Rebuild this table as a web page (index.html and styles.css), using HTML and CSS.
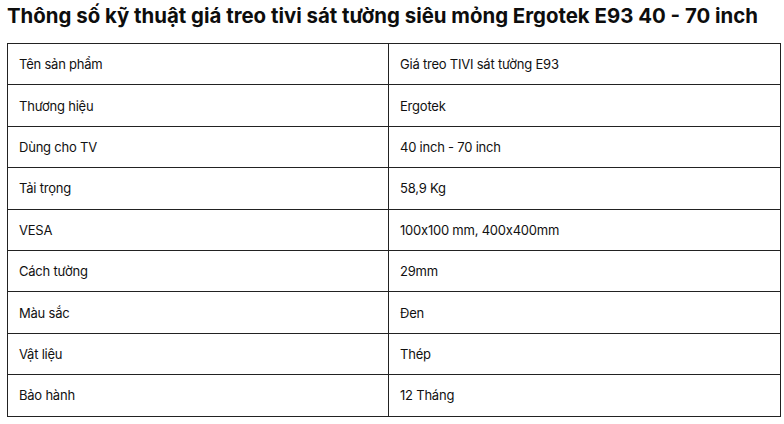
FILE: index.html
```html
<!DOCTYPE html>
<html lang="vi">
<head>
<meta charset="utf-8">
<link rel="stylesheet" href="styles.css">
</head>
<body>
<h2 class="title">Thông số kỹ thuật giá treo tivi sát tường siêu mỏng Ergotek E93 40 - 70 inch</h2>
<table class="spec">
<tbody>
<tr><td>Tên sản phẩm</td><td>Giá treo TIVI sát tường E93</td></tr>
<tr><td>Thương hiệu</td><td>Ergotek</td></tr>
<tr><td>Dùng cho TV</td><td>40 inch - 70 inch</td></tr>
<tr><td>Tải trọng</td><td>58,9 Kg</td></tr>
<tr><td>VESA</td><td>100x100 mm, 400x400mm</td></tr>
<tr><td>Cách tường</td><td>29mm</td></tr>
<tr><td>Màu sắc</td><td>Đen</td></tr>
<tr><td>Vật liệu</td><td>Thép</td></tr>
<tr><td>Bảo hành</td><td>12 Tháng</td></tr>
</tbody>
</table>
</body>
</html>
```
FILE: styles.css
```css
html, body {
  margin: 0;
  padding: 0;
  background: #fff;
}
body {
  font-family: Inter, "Noto Sans", sans-serif;
  color: #111;
  padding: 0 4px 0 7px;
}
.title {
  margin: 0;
  padding-top: 3px;
  height: 40px;
  font-size: 20.4px;
  font-weight: 700;
  letter-spacing: 0;
  line-height: 26px;
  color: #0d0d0d;
}
.spec {
  width: 774px;
  border-collapse: collapse;
  margin-top: 0;
}
.spec td {
  border: 1px solid #222;
  height: 40.4px;
  padding: 0 0 0 11px;
  font-size: 13px;
  letter-spacing: -0.22px;
  vertical-align: middle;
}
.spec td:first-child {
  width: 369px;
}
```
